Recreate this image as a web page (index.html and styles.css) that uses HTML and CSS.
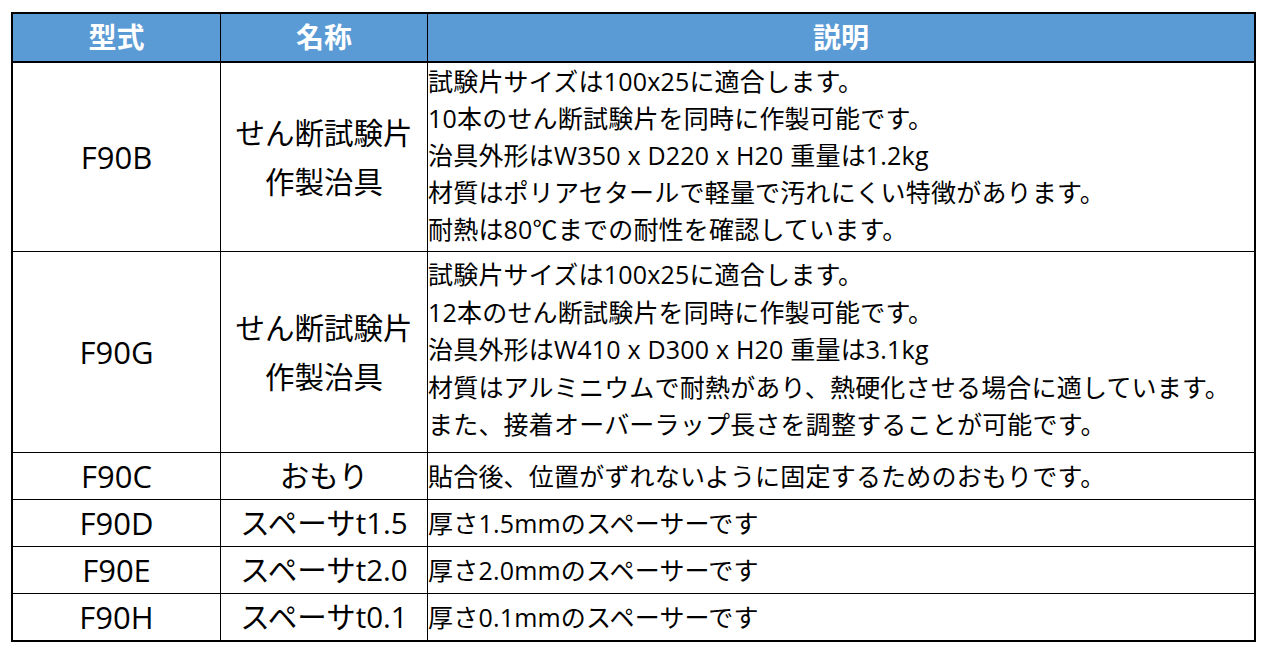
FILE: index.html
```html
<!DOCTYPE html>
<html lang="ja">
<head>
<meta charset="utf-8">
<title>治具一覧</title>
<link rel="stylesheet" href="styles.css">
</head>
<body>
<table class="spec">
  <thead>
    <tr class="head-row">
      <th class="col-model">型式</th>
      <th class="col-name">名称</th>
      <th class="col-desc">説明</th>
    </tr>
  </thead>
  <tbody>
    <tr class="row-tall1">
      <td class="model">F90B</td>
      <td class="name multi">せん断試験片<br>作製治具</td>
      <td class="desc lines first">試験片サイズは100x25に適合します。<br>10本のせん断試験片を同時に作製可能です。<br>治具外形はW350 x D220 x H20 重量は1.2kg<br>材質はポリアセタールで軽量で汚れにくい特徴があります。<br>耐熱は80℃までの耐性を確認しています。</td>
    </tr>
    <tr class="row-tall2">
      <td class="model">F90G</td>
      <td class="name multi">せん断試験片<br>作製治具</td>
      <td class="desc lines second">試験片サイズは100x25に適合します。<br>12本のせん断試験片を同時に作製可能です。<br>治具外形はW410 x D300 x H20 重量は3.1kg<br>材質はアルミニウムで耐熱があり、熱硬化させる場合に適しています。<br>また、接着オーバーラップ長さを調整することが可能です。</td>
    </tr>
    <tr class="row-single">
      <td class="model">F90C</td>
      <td class="name">おもり</td>
      <td class="desc">貼合後、位置がずれないように固定するためのおもりです。</td>
    </tr>
    <tr class="row-single">
      <td class="model">F90D</td>
      <td class="name">スペーサt1.5</td>
      <td class="desc">厚さ1.5mmのスペーサーです</td>
    </tr>
    <tr class="row-single">
      <td class="model">F90E</td>
      <td class="name">スペーサt2.0</td>
      <td class="desc">厚さ2.0mmのスペーサーです</td>
    </tr>
    <tr class="row-single last">
      <td class="model">F90H</td>
      <td class="name">スペーサt0.1</td>
      <td class="desc">厚さ0.1mmのスペーサーです</td>
    </tr>
  </tbody>
</table>
</body>
</html>
```

FILE: styles.css
```css
html, body {
  margin: 0;
  padding: 0;
  background: #ffffff;
}

body {
  font-family: "Open Sans", "Noto Sans CJK JP", sans-serif;
  color: #000000;
}

.spec {
  margin: 12px 0 0 11px;
  border: 2px solid #000000;
  border-collapse: separate;
  border-spacing: 0;
  table-layout: fixed;
  width: 1245px;
}

.spec th,
.spec td {
  padding: 0;
  border-right: 1px solid #000000;
  border-bottom: 1px solid #000000;
  box-sizing: border-box;
}

.spec th:last-child,
.spec td:last-child {
  border-right: none;
}

.spec tr.last td {
  border-bottom: none;
}

.col-model { width: 208px; }
.col-name { width: 207px; }
.col-desc { width: auto; }

.head-row th {
  height: 49px;
  background: #5b9bd5;
  color: #ffffff;
  font-weight: bold;
  font-size: 28px;
  text-align: center;
  vertical-align: middle;
  border-bottom: 2px solid #000000;
  line-height: 47px;
}

.model {
  text-align: center;
  vertical-align: middle;
  font-size: 31px;
  line-height: 40px;
}

.name {
  text-align: center;
  vertical-align: middle;
  font-size: 29.5px;
  line-height: 40px;
  white-space: nowrap;
}

.name.multi {
  line-height: 49px;
}

.desc {
  text-align: left;
  vertical-align: middle;
  font-size: 25px;
  line-height: 37px;
  padding-left: 6px;
  letter-spacing: 0.2px;
  white-space: nowrap;
}

.desc.lines {
  vertical-align: top;
}

.desc.first {
  padding-top: 0;
}

.desc.second {
  padding-top: 4px;
  line-height: 37.6px;
}

.row-tall1 td { height: 189px; }
.row-tall2 td { height: 201px; }
.row-single td { height: 47px; }
.row-single.last td { height: 46px; }
```
